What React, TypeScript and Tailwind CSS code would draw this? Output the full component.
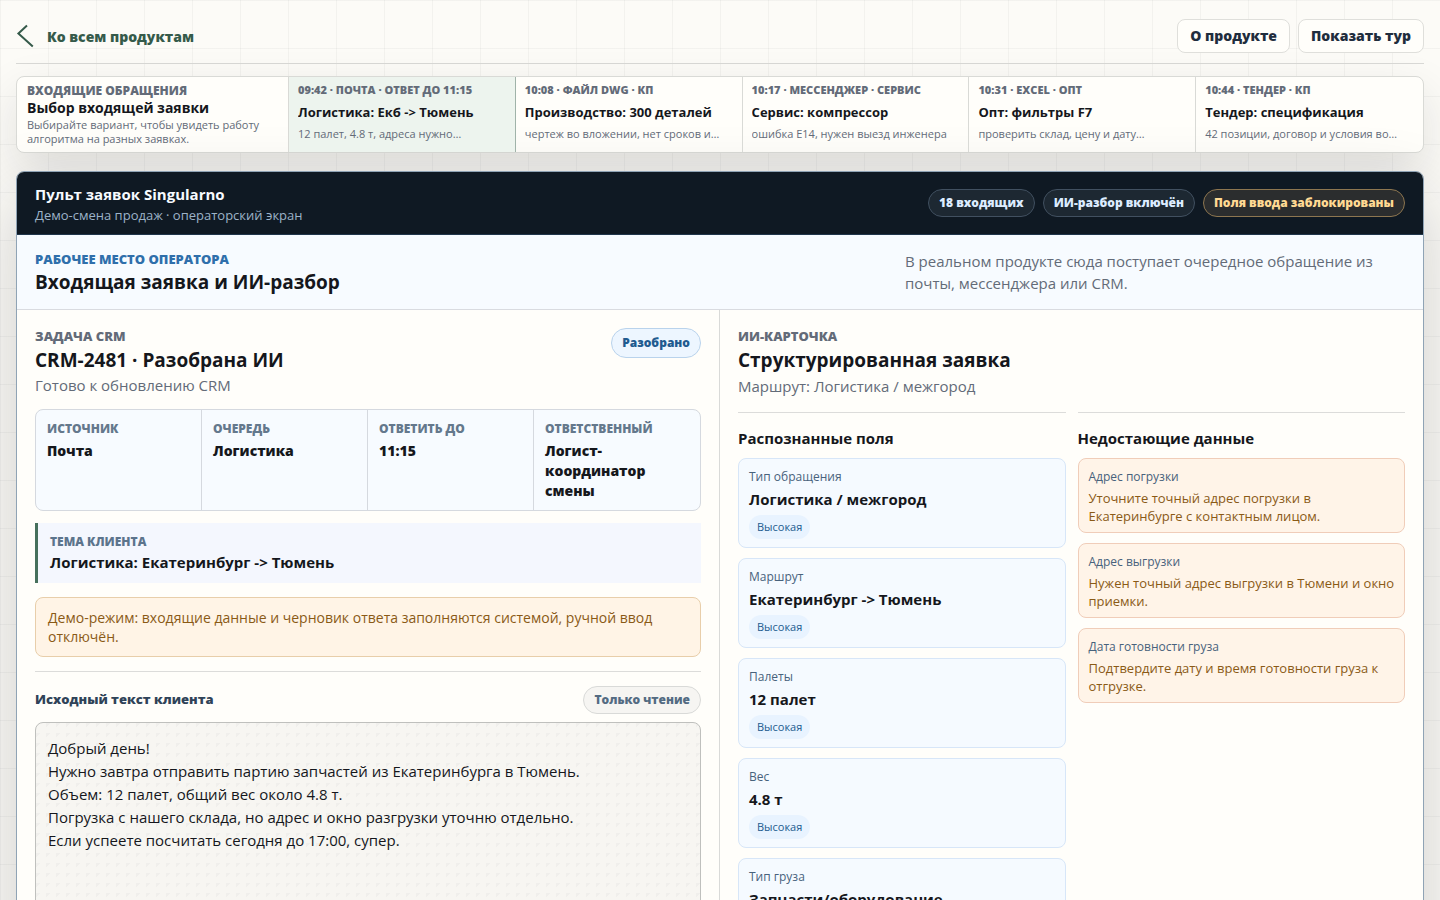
import { useState } from "react";

const requests = [
  { meta: "09:42 · ПОЧТА · ОТВЕТ ДО 11:15", title: "Логистика: Екб -> Тюмень", note: "12 палет, 4.8 т, адреса нужно…" },
  { meta: "10:08 · ФАЙЛ DWG · КП", title: "Производство: 300 деталей", note: "чертеж во вложении, нет сроков и…" },
  { meta: "10:17 · МЕССЕНДЖЕР · СЕРВИС", title: "Сервис: компрессор", note: "ошибка E14, нужен выезд инженера" },
  { meta: "10:31 · EXCEL · ОПТ", title: "Опт: фильтры F7", note: "проверить склад, цену и дату…" },
  { meta: "10:44 · ТЕНДЕР · КП", title: "Тендер: спецификация", note: "42 позиции, договор и условия во…" },
];

const facts = [
  { label: "ИСТОЧНИК", value: "Почта" },
  { label: "ОЧЕРЕДЬ", value: "Логистика" },
  { label: "ОТВЕТИТЬ ДО", value: "11:15" },
  { label: "ОТВЕТСТВЕННЫЙ", value: "Логист-координатор смены" },
];

const fields = [
  { label: "Тип обращения", value: "Логистика / межгород" },
  { label: "Маршрут", value: "Екатеринбург -> Тюмень" },
  { label: "Палеты", value: "12 палет" },
  { label: "Вес", value: "4.8 т" },
  { label: "Тип груза", value: "Запчасти/оборудование" },
];

const missing = [
  { label: "Адрес погрузки", hint: "Уточните точный адрес погрузки в Екатеринбурге с контактным лицом." },
  { label: "Адрес выгрузки", hint: "Нужен точный адрес выгрузки в Тюмени и окно приемки." },
  { label: "Дата готовности груза", hint: "Подтвердите дату и время готовности груза к отгрузке." },
];

const clientText = `Добрый день!
Нужно завтра отправить партию запчастей из Екатеринбурга в Тюмень.
Объем: 12 палет, общий вес около 4.8 т.
Погрузка с нашего склада, но адрес и окно разгрузки уточню отдельно.
Если успеете посчитать сегодня до 17:00, супер.`;

function TopBar() {
  return (
    <header className="flex h-14 items-center justify-between border-b border-[#d9d9d6]">
      <a href="#products" className="flex items-center gap-[11px] text-sm font-extrabold text-[#355a4a]">
        <svg className="h-6 w-5" viewBox="0 0 20 24" fill="none" stroke="currentColor" strokeWidth="2">
          <path d="M11 1.4 L2.4 9.4 L16.8 22.6" />
        </svg>
        <span className="pt-[2px]">Ко всем продуктам</span>
      </a>

      <div className="flex gap-2">
        <button className="h-[34px] rounded-lg border border-[#dfdfdb] bg-[#fffefa] px-3 text-sm font-extrabold text-[#1f2d3d]">
          О продукте
        </button>
        <button className="h-[34px] rounded-lg border border-[#dfdfdb] bg-[#fffefa] px-3 text-sm font-extrabold text-[#1f2d3d]">
          Показать тур
        </button>
      </div>
    </header>
  );
}

type RequestPickerProps = { active: number; onSelect: (index: number) => void };

function RequestPicker({ active, onSelect }: RequestPickerProps) {
  return (
    <section className="mt-3 grid grid-cols-[272px_repeat(5,minmax(0,1fr))] overflow-hidden rounded-lg border border-[#d9dad6] bg-[#fffefa] shadow-[0_18px_48px_rgba(23,26,33,0.12)]">
      <div className="border-r border-[#d9dad6] px-[10px] pt-[6px] pb-[6px]">
        <p className="text-xs leading-4 font-extrabold text-[#636b78]">ВХОДЯЩИЕ ОБРАЩЕНИЯ</p>
        <h2 className="text-sm leading-[18px] font-bold">Выбор входящей заявки</h2>
        <p className="pt-[1px] text-[11px] leading-[14px] text-[#636b78]">
          Выбирайте вариант, чтобы увидеть работу алгоритма на разных заявках.
        </p>
      </div>

      {requests.map((request, index) => (
        <button
          key={request.meta}
          onClick={() => onSelect(index)}
          className={`flex flex-col gap-[6px] border-r px-[9px] pt-[5px] pb-[6px] text-left last:border-r-0 ${
            index === active ? "border-[#a0b3a9] bg-[#edf4ee]" : "border-[#d9dad6]"
          }`}
        >
          <span className="w-full truncate text-[11px] leading-4 font-extrabold text-[#636b78]">{request.meta}</span>
          <span className="w-full truncate text-[13px] leading-4 font-bold">{request.title}</span>
          <span className="w-full truncate text-[11px] leading-4 text-[#636b78]">{request.note}</span>
        </button>
      ))}
    </section>
  );
}

function ConsoleHeader() {
  return (
    <>
      <div className="flex items-center justify-between border-b border-[#20364b] bg-[#0f1923] px-[18px] py-[10px]">
        <div>
          <h1 className="text-[15px] leading-6 font-bold text-[#f7fbff]">Пульт заявок Singularno</h1>
          <p className="text-[13px] leading-[18px] text-[#9db3c8]">Демо-смена продаж · операторский экран</p>
        </div>

        <div className="flex gap-2 text-xs font-extrabold">
          <span className="flex h-7 items-center rounded-full border border-[#415060] bg-[#1d2832] px-[10px] text-[#dcecff]">
            18 входящих
          </span>
          <span className="flex h-7 items-center rounded-full border border-[#415060] bg-[#1d2832] px-[10px] text-[#dcecff]">
            ИИ-разбор включён
          </span>
          <span className="flex h-7 items-center rounded-full border border-[#8d7650] bg-[#2b2d2e] px-[10px] text-[#ffd993]">
            Поля ввода заблокированы
          </span>
        </div>
      </div>

      <div className="flex items-center justify-between border-b border-[#d9dbe0] bg-[#f7fbff] px-[18px] py-[15px]">
        <div>
          <p className="text-[13px] leading-[18px] font-extrabold text-[#2f6fab]">РАБОЧЕЕ МЕСТО ОПЕРАТОРА</p>
          <h2 className="mt-[2px] text-[19px] leading-6 font-bold">Входящая заявка и ИИ-разбор</h2>
        </div>
        <p className="w-[500px] text-[15px] leading-[22px] text-[#636b78]">
          В реальном продукте сюда поступает очередное обращение из почты, мессенджера или CRM.
        </p>
      </div>
    </>
  );
}

function TaskPanel() {
  return (
    <section className="border-r border-[#d9dad8] p-[18px]">
      <div className="flex items-start justify-between">
        <div>
          <p className="text-[13px] leading-4 font-extrabold text-[#636b78]">ЗАДАЧА CRM</p>
          <h2 className="mt-[2px] text-[19px] leading-7 font-bold">CRM-2481 · Разобрана ИИ</h2>
          <p className="text-[15px] leading-[23px] text-[#636b78]">Готово к обновлению CRM</p>
        </div>
        <span className="flex h-[30px] items-center rounded-full border border-[#b9d3ec] bg-[#edf6ff] px-[10px] text-xs font-extrabold text-[#215b8f]">
          Разобрано
        </span>
      </div>

      <dl className="mt-3 grid grid-cols-4 overflow-hidden rounded-lg border border-[#d5d9df] bg-[#f7fbff]">
        {facts.map((fact) => (
          <div key={fact.label} className="border-r border-[#d5d9df] px-[11px] pt-[10px] pb-[9px] last:border-r-0">
            <dt className="text-xs leading-[18px] font-extrabold text-[#64788c]">{fact.label}</dt>
            <dd className="mt-[3px] text-sm leading-5 font-extrabold">{fact.value}</dd>
          </div>
        ))}
      </dl>

      <div className="mt-3 border-l-3 border-[#46705c] bg-[#f4f7fe] px-3 py-[10px]">
        <p className="text-xs leading-[17px] font-extrabold text-[#5c748c]">ТЕМА КЛИЕНТА</p>
        <p className="mt-[2px] text-[15px] leading-[21px] font-bold">Логистика: Екатеринбург -&gt; Тюмень</p>
      </div>

      <p className="mt-[14px] rounded-lg border border-[#e8ceaa] bg-[#fff4e6] px-3 py-[10px] text-sm leading-[19px] text-[#8a5a16]">
        Демо-режим: входящие данные и черновик ответа заполняются системой, ручной ввод отключён.
      </p>

      <div className="mt-[14px] flex items-center justify-between border-t border-[#dcdcda] pt-[14px] pb-2">
        <label htmlFor="client-text" className="text-[13px] font-extrabold text-[#2f4358]">
          Исходный текст клиента
        </label>
        <span className="flex h-7 items-center rounded-full border border-[#d9dad8] bg-[#f6f5f2] px-[10px] text-xs font-extrabold text-[#536b82]">
          Только чтение
        </span>
      </div>
      <textarea
        id="client-text"
        readOnly
        value={clientText}
        className="block h-60 w-full resize-none rounded-lg border border-[#bfc0bd] bg-[#f7f6f2] bg-[linear-gradient(135deg,#f0efec_25%,transparent_25%)] bg-[length:10px_10px] px-3 py-[14px] text-[15px] leading-[23px] outline-none"
      />
    </section>
  );
}

function CardPanel() {
  return (
    <section className="p-[18px]">
      <p className="text-[13px] leading-4 font-extrabold text-[#636b78]">ИИ-КАРТОЧКА</p>
      <h2 className="mt-[2px] text-[19px] leading-7 font-bold">Структурированная заявка</h2>
      <p className="mt-[1px] text-[15px] leading-[23px] text-[#636b78]">Маршрут: Логистика / межгород</p>

      <div className="mt-[14px] grid grid-cols-2 items-start gap-3">
        <div className="border-t border-[#dcdcda] pt-[14px]">
          <h3 className="text-[15px] leading-[22px] font-bold">Распознанные поля</h3>
          <ul className="mt-[9px] flex flex-col gap-[10px]">
            {fields.map((field) => (
              <li key={field.label} className="rounded-lg border border-[#d7e6f8] bg-[#f5faff] px-[10px] py-2">
                <p className="text-xs leading-5 text-[#48627c]">{field.label}</p>
                <p className="text-[15px] leading-6 font-bold">{field.value}</p>
                <p className="mt-1 flex h-6 w-fit items-center rounded-full bg-[#e8f3ff] px-2 text-[11px] text-[#215b8f]">
                  Высокая
                </p>
              </li>
            ))}
          </ul>
        </div>

        <div className="border-t border-[#dcdcda] pt-[14px]">
          <h3 className="text-[15px] leading-[22px] font-bold">Недостающие данные</h3>
          <ul className="mt-[9px] flex flex-col gap-[10px]">
            {missing.map((item) => (
              <li key={item.label} className="rounded-lg border border-[#f0cdb9] bg-[#fff4e8] pt-2 pr-1 pb-[7px] pl-[10px]">
                <p className="text-xs leading-5 text-[#48627c]">{item.label}</p>
                <p className="mt-[2px] text-[13px] leading-[18px] text-[#8a5a16]">{item.hint}</p>
              </li>
            ))}
          </ul>
        </div>
      </div>
    </section>
  );
}

function App() {
  const [active, setActive] = useState(0);

  return (
    <div className="min-h-screen bg-[#fcfbf7] bg-[linear-gradient(rgba(23,26,33,0.04)_1px,transparent_1px),linear-gradient(90deg,rgba(23,26,33,0.04)_1px,transparent_1px)] bg-[length:48px_48px] px-4 pt-2 pb-8 font-['Open_Sans','Noto_Sans',sans-serif] text-[#15171c]">
      <TopBar />
      <RequestPicker active={active} onSelect={setActive} />

      <main className="mt-[18px] overflow-hidden rounded-lg border border-[#8fa3b5] bg-[#fffefa] shadow-[0_24px_70px_rgba(23,26,33,0.2)]">
        <ConsoleHeader />
        <div className="grid grid-cols-2">
          <TaskPanel />
          <CardPanel />
        </div>
      </main>
    </div>
  );
}

export default App;
